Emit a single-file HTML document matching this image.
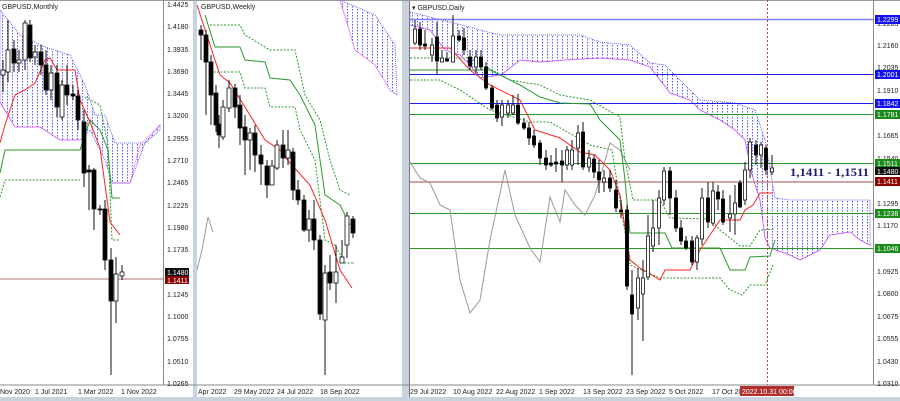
<!DOCTYPE html><html><head><meta charset="utf-8"><style>
body{margin:0;width:900px;height:401px;overflow:hidden;background:#fff;font-family:"Liberation Sans",sans-serif}
svg{display:block}
text{font-family:"Liberation Sans",sans-serif;font-size:7px;fill:#222}
</style></head><body>
<svg id="s" width="900" height="401" viewBox="0 0 900 401" xmlns="http://www.w3.org/2000/svg">
<defs>
<pattern id="cl" width="5" height="3" patternUnits="userSpaceOnUse"><rect x="2" y="0" width="1" height="1.5" fill="#5a5aff"/></pattern>
<clipPath id="c1"><rect x="0" y="0" width="163" height="385"/></clipPath>
<clipPath id="c2"><rect x="197" y="0" width="205" height="385"/></clipPath>
<clipPath id="c3"><rect x="410" y="0" width="463" height="385"/></clipPath>
</defs>
<rect width="900" height="401" fill="#fff"/>
<rect x="193" y="0" width="4" height="401" fill="#c9d3df"/>
<rect x="402" y="0" width="7" height="401" fill="#c9d3df"/>
<rect x="409" y="0" width="1" height="401" fill="#777"/>
<rect x="0" y="397" width="900" height="4" fill="#c9d3df"/>
<rect x="0" y="0" width="900" height="1" fill="#999"/>
<line x1="0" y1="385" x2="900" y2="385" stroke="#888" stroke-width="1"/>
<line x1="163.5" y1="0" x2="163.5" y2="385" stroke="#888"/>
<line x1="873.5" y1="0" x2="873.5" y2="385" stroke="#888"/>

<g clip-path="url(#c1)">
<polygon points="0,10 20,35 45,47 70,55 85,85 95,115 105,115 115,143 145,143 160,125 160,130 145,143 130,183 112,183 105,160 90,130 80,140 60,140 40,127 15,127 0,102" fill="url(#cl)" stroke="#4040ff" stroke-dasharray="1,1" stroke-width="0.8"/>
<polyline points="0,102 15,127 40,127 60,140 80,140" fill="none" stroke="#ff40ff" stroke-dasharray="1,1"/>
<polyline points="112,183 130,183 140,145 160,125" fill="none" stroke="#ff40ff" stroke-dasharray="1,1"/>
<polyline points="0,173 5,150 80,150 90,120 100,130 108,150 112,198 120,198" fill="none" stroke="#2a9a2a"/>
<polyline points="0,197 5,180 80,180" fill="none" stroke="#2a9a2a" stroke-dasharray="2,1.5"/>
<polyline points="85,97 100,105 108,145 112,240 120,240" fill="none" stroke="#2a9a2a" stroke-dasharray="2,1.5"/>
<polyline points="0,143 5,125 15,95 25,90 35,83 45,60 50,58 57,70 75,70 80,100 90,122 100,148 110,222 120,235" fill="none" stroke="#f22"/>
<line x1="0" y1="279" x2="163" y2="279" stroke="#b07070"/>
</g>
<g clip-path="url(#c2)">
<polygon points="340,0 375,15 395,45 397,95 390,90 375,65 355,50" fill="url(#cl)" stroke="#4040ff" stroke-dasharray="1,1" stroke-width="0.8"/>
<polyline points="340,0 355,50 375,65 390,90" fill="none" stroke="#ff40ff" stroke-dasharray="1,1"/>
<polyline points="197,270 202,250 208,217 213,232" fill="none" stroke="#999"/>
<polyline points="205,15 215,47 240,47 245,60 265,62 270,78 290,80 300,95 315,125 325,195 340,205 350,225" fill="none" stroke="#2a9a2a"/>
<polyline points="210,25 240,25 245,35 270,50 295,50 305,95 320,120 330,160 340,190 350,195" fill="none" stroke="#2a9a2a" stroke-dasharray="2,1.5"/>
<polyline points="210,72 240,72 245,88 265,88 270,107 295,107 300,130 315,160 325,240 335,245 345,263 355,263" fill="none" stroke="#2a9a2a" stroke-dasharray="2,1.5"/>
<polyline points="197,5 215,60 220,75 230,83 245,107 265,140 280,150 290,163 310,185 325,220 340,270 352,288" fill="none" stroke="#f22"/>
</g>
<g clip-path="url(#c3)">
<polygon points="410,12 470,27 480,30 500,35 580,35 600,42 630,45 650,63 665,65 690,90 700,100 735,103 755,110 765,140 775,198 790,200 870,200 870,245 860,240 850,232 830,235 820,250 800,260 790,255 770,248 765,238 760,200 752,175 745,140 735,130 720,120 700,110 690,100 670,93 650,67 630,60 600,58 565,60 540,62 520,60 505,72 500,75 480,78 470,65 460,55 445,50 430,30 410,25" fill="url(#cl)" stroke="#4040ff" stroke-dasharray="1,1" stroke-width="0.8"/>
<polyline points="870,245 860,240 850,232 830,235 820,250 800,260 790,255 770,248 765,238 760,200 752,175 745,140 735,130 720,120 700,110 690,100 670,93 650,67 630,60 600,58 565,60 540,62 520,60 505,72 500,75 480,78 470,65 460,55 445,50 430,30 410,25" fill="none" stroke="#ff40ff" stroke-dasharray="1,1"/>
<line x1="410" y1="19.5" x2="873" y2="19.5" stroke="#8080ff" stroke-width="1.5"/>
<line x1="410" y1="74.5" x2="873" y2="74.5" stroke="#2020ee"/>
<line x1="410" y1="103.5" x2="873" y2="103.5" stroke="#2020ee"/>
<line x1="410" y1="114.5" x2="873" y2="114.5" stroke="#2a9a2a"/>
<line x1="410" y1="163.5" x2="873" y2="163.5" stroke="#2a9a2a"/>
<line x1="410" y1="182" x2="873" y2="182" stroke="#c08888" stroke-width="1.5"/>
<line x1="410" y1="213.5" x2="873" y2="213.5" stroke="#2a9a2a"/>
<line x1="410" y1="248.5" x2="873" y2="248.5" stroke="#2a9a2a"/>
<line x1="767.5" y1="0" x2="767.5" y2="385" stroke="#c04040" stroke-dasharray="2,2"/>
<polyline points="410,162 420,178 430,183 440,205 450,210 460,280 470,313 480,300 490,240 505,170 515,215 530,248 540,262 550,197 560,222 565,190 575,205 585,215 595,195 610,143 620,150 630,170" fill="none" stroke="#999"/>
<polyline points="410,70 490,70 520,85 540,97 560,103 590,104 600,120 620,140 625,180 630,233 665,233 672,248 720,248 730,270 745,270 750,257 770,256 775,240" fill="none" stroke="#2a9a2a"/>
<polyline points="410,58 470,58 510,80 540,85 560,95 590,100 620,117 625,160 633,200 660,200 670,218 710,219 720,230 740,246 750,246 760,230 775,229" fill="none" stroke="#2a9a2a" stroke-dasharray="2,1.5"/>
<polyline points="410,80 440,80 460,90 490,110 530,122 550,122 590,145 612,150 630,265 660,278 720,278 730,290 742,295 750,285 765,285 773,265" fill="none" stroke="#2a9a2a" stroke-dasharray="2,1.5"/>
<polyline points="410,48 450,48 470,70 490,85 520,100 535,130 560,138 580,152 595,155 610,170 620,195 630,260 640,268 660,280 665,270 690,270 700,250 710,235 720,220 740,220 745,210 753,205 760,193 772,193" fill="none" stroke="#f22"/>
</g>

<text x="2" y="9">GBPUSD,Monthly</text>
<text x="201" y="9">GBPUSD,Weekly</text>
<text x="412" y="10">▾ GBPUSD,Daily</text>

<g>
<text x="167" y="7">1.4425</text><text x="167" y="29">1.4180</text><text x="167" y="52">1.3935</text><text x="167" y="74">1.3690</text><text x="167" y="96">1.3445</text><text x="167" y="118">1.3200</text><text x="167" y="141">1.2955</text><text x="167" y="163">1.2710</text><text x="167" y="185">1.2465</text><text x="167" y="208">1.2225</text><text x="167" y="230">1.1980</text><text x="167" y="252">1.1735</text><text x="167" y="297">1.1245</text><text x="167" y="319">1.1000</text><text x="167" y="341">1.0755</text><text x="167" y="364">1.0510</text><text x="167" y="386">1.0265</text>
</g>
<rect x="165" y="268" width="24" height="8" fill="#111"/><text x="167" y="275" style="fill:#fff">1.1480</text>
<rect x="165" y="276" width="24" height="8" fill="#8b0000"/><text x="167" y="283" style="fill:#fff">1.1411</text>

<g>
<text x="877" y="26">1.2285</text><text x="877" y="48">1.2160</text><text x="877" y="70">1.2035</text><text x="877" y="93">1.1910</text><text x="877" y="138">1.1665</text><text x="877" y="161">1.1540</text><text x="877" y="206">1.1295</text><text x="877" y="228">1.1170</text><text x="877" y="274">1.0925</text><text x="877" y="296">1.0800</text><text x="877" y="319">1.0675</text><text x="877" y="341">1.0555</text><text x="877" y="364">1.0430</text><text x="877" y="386">1.0310</text>
</g>
<g>
<rect x="875" y="15" width="25" height="9" fill="#1010f0"/><text x="877" y="22" style="fill:#fff">1.2299</text>
<rect x="875" y="70" width="25" height="9" fill="#1010f0"/><text x="877" y="77" style="fill:#fff">1.2001</text>
<rect x="875" y="99" width="25" height="9" fill="#1010f0"/><text x="877" y="106" style="fill:#fff">1.1842</text>
<rect x="875" y="110" width="25" height="9" fill="#1a8a1a"/><text x="877" y="117" style="fill:#fff">1.1781</text>
<rect x="875" y="159" width="25" height="8" fill="#1a8a1a"/><text x="877" y="166" style="fill:#fff">1.1511</text>
<rect x="875" y="167" width="25" height="8" fill="#111"/><text x="877" y="174" style="fill:#fff">1.1480</text>
<rect x="875" y="177" width="25" height="9" fill="#8b0000"/><text x="877" y="184" style="fill:#fff">1.1411</text>
<rect x="875" y="209" width="25" height="9" fill="#1a8a1a"/><text x="877" y="216" style="fill:#fff">1.1238</text>
<rect x="875" y="244" width="25" height="9" fill="#1a8a1a"/><text x="877" y="251" style="fill:#fff">1.1046</text>
</g>
<text x="790" y="176" textLength="79" lengthAdjust="spacingAndGlyphs" style="font-family:'Liberation Serif',serif;font-weight:bold;font-size:12px;fill:#1a1a6e">1,1411 - 1,1511</text>

<g>
<text x="0" y="394">Nov 2020</text><text x="35" y="394">1 Jul 2021</text><text x="78" y="394">1 Mar 2022</text><text x="121" y="394">1 Nov 2022</text>
<text x="198" y="394">Apr 2022</text><text x="234" y="394">29 May 2022</text><text x="277" y="394">24 Jul 2022</text><text x="320" y="394">18 Sep 2022</text>
<text x="410" y="394">29 Jul 2022</text><text x="453" y="394">10 Aug 2022</text><text x="496" y="394">22 Aug 2022</text><text x="539" y="394">1 Sep 2022</text><text x="583" y="394">13 Sep 2022</text><text x="626" y="394">23 Sep 2022</text><text x="669" y="394">5 Oct 2022</text><text x="712" y="394">17 Oct 20</text>
<rect x="740" y="386" width="54" height="10" fill="#b03030"/><text x="742" y="394" style="fill:#fff">2022.10.31 00:00</text>
</g>
<g id="cand"></g>
</svg>
<script>
var ns="http://www.w3.org/2000/svg",g=document.getElementById("cand");
function c(x,t,b,h,l,col,w){
 var L=document.createElementNS(ns,"line");L.setAttribute("x1",x);L.setAttribute("x2",x);L.setAttribute("y1",h);L.setAttribute("y2",l);L.setAttribute("stroke","#111");g.appendChild(L);
 var R=document.createElementNS(ns,"rect");R.setAttribute("x",x-w/2);R.setAttribute("y",t);R.setAttribute("width",w);R.setAttribute("height",Math.max(1,b-t));
 R.setAttribute("fill",col=="b"?"#000":"#fff");R.setAttribute("stroke","#111");R.setAttribute("stroke-width","0.8");g.appendChild(R);}
var M=[[3,70,75,60,92,"w"],[8,50,72,20,82,"w"],[14,49,63,40,72,"b"],[19,60,63,50,72,"w"],[25,23,60,20,70,"w"],[30,25,58,20,62,"b"],[35,52,57,45,65,"w"],[41,52,65,45,75,"b"],[46,65,90,50,95,"b"],[51,73,90,65,100,"w"],[57,73,107,65,117,"b"],[62,85,117,80,120,"w"],[67,85,95,65,105,"b"],[73,94,96,85,100,"b"],[78,96,120,90,130,"b"],[84,122,173,110,187,"b"],[89,170,172,165,210,"b"],[94,170,209,168,230,"b"],[100,209,210,205,215,"b"],[105,209,260,200,270,"b"],[111,260,301,248,375,"b"],[116,274,301,257,323,"w"],[122,272,276,265,280,"w"]];
M.forEach(function(a){c(a[0],a[1],a[2],a[3],a[4],a[5],4)});
var W=[[201,30,35,25,60,"b"],[206,35,62,30,115,"b"],[211,62,95,55,125,"b"],[216,93,125,85,132,"b"],[219,124,135,115,148,"b"],[223,107,137,100,140,"w"],[229,88,108,80,112,"w"],[235,88,107,84,118,"b"],[240,105,128,95,145,"b"],[245,127,140,115,175,"b"],[250,133,140,128,170,"w"],[255,133,155,125,172,"b"],[261,155,164,145,185,"b"],[267,166,185,160,198,"b"],[272,166,185,160,185,"w"],[277,145,168,140,170,"w"],[283,145,158,130,168,"b"],[288,150,158,130,165,"w"],[293,152,190,148,200,"b"],[298,190,200,180,205,"b"],[304,200,230,195,232,"b"],[309,219,230,210,242,"w"],[314,219,240,200,250,"b"],[320,240,314,235,320,"b"],[325,273,320,265,375,"w"],[330,272,283,255,290,"b"],[336,272,283,245,303,"w"],[342,257,263,240,262,"w"],[347,216,245,212,258,"w"],[353,219,233,216,238,"b"]];
W.forEach(function(a){c(a[0],a[1],a[2],a[3],a[4],a[5],4)});
var D=[[415,29,43,20,45,"w"],[420,29,45,22,50,"b"],[425,44,46,30,50,"b"],[432,45,55,38,62,"w"],[437,37,61,22,75,"b"],[442,58,62,50,62,"w"],[447,59,61,52,62,"b"],[453,36,62,15,62,"w"],[459,36,40,30,42,"b"],[464,38,50,28,55,"b"],[470,57,66,50,70,"b"],[476,57,67,50,73,"w"],[481,57,67,50,70,"b"],[486,67,88,62,90,"b"],[492,88,108,85,110,"b"],[497,105,118,100,122,"b"],[502,105,117,100,126,"w"],[508,105,113,100,118,"w"],[513,105,113,95,115,"w"],[518,105,123,94,125,"b"],[524,123,128,118,130,"b"],[529,128,138,122,145,"b"],[534,136,145,130,148,"b"],[540,143,158,140,165,"b"],[546,158,165,150,170,"b"],[551,163,165,155,167,"b"],[556,162,164,148,172,"b"],[562,161,165,150,182,"b"],[567,150,165,146,170,"w"],[572,150,165,140,170,"w"],[578,133,148,125,165,"w"],[583,132,167,122,170,"b"],[589,158,167,150,172,"w"],[594,159,172,155,178,"b"],[599,172,180,160,193,"b"],[604,178,182,170,192,"w"],[610,178,188,170,192,"b"],[616,190,208,180,212,"b"],[621,210,212,200,218,"b"],[627,210,286,205,290,"b"],[632,295,314,270,375,"b"],[638,278,308,268,320,"w"],[643,278,294,260,341,"w"],[648,236,277,215,280,"w"],[653,228,246,200,252,"w"],[659,198,228,190,245,"w"],[664,171,200,167,205,"w"],[670,171,198,167,215,"b"],[676,198,228,190,232,"b"],[681,228,241,220,245,"b"],[686,241,248,236,250,"b"],[692,241,262,236,265,"b"],[697,238,262,235,270,"w"],[702,198,239,188,245,"w"],[708,198,222,182,228,"b"],[713,191,223,182,226,"w"],[718,192,199,185,210,"b"],[723,199,222,190,225,"b"],[730,214,218,195,232,"w"],[735,203,214,185,235,"w"],[740,183,207,180,208,"b"],[745,170,200,162,205,"w"],[750,142,170,138,178,"w"],[756,145,155,140,165,"b"],[761,145,155,142,168,"w"],[766,148,170,145,175,"b"],[772,168,172,155,175,"w"]];
D.forEach(function(a){c(a[0],a[1],a[2],a[3],a[4],a[5],3.2)});
</script>
</body></html>
